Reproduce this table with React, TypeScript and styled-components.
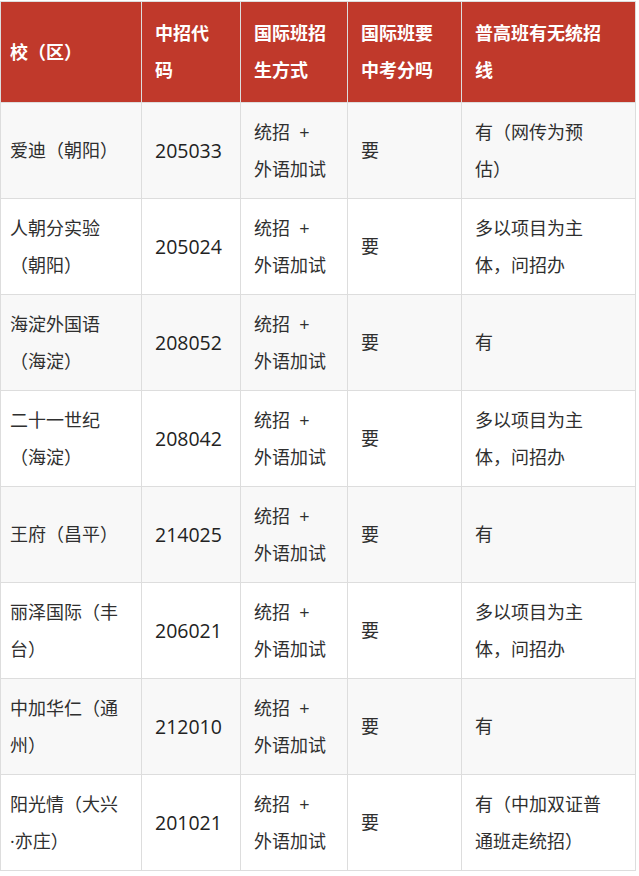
import React from "react"
import styled, { createGlobalStyle } from "styled-components"

const GlobalStyle = createGlobalStyle`
  html, body {
    margin: 0;
    padding: 0;
    background: #fff;
  }
  body {
    font-family: "Open Sans", "Noto Sans CJK SC", sans-serif;
  }
`

const Page = styled.div`
  width: 639px;
  padding-top: 1px;
`

const Table = styled.table`
  width: 635px;
  table-layout: fixed;
  border-collapse: collapse;
  font-size: 18px;
  line-height: 37px;
  color: #2f2f2f;
`

const HeadRow = styled.tr`
  height: 101px;
  background-color: #c0392b;
`

const HeadCell = styled.th`
  padding: 0 13px;
  text-align: left;
  vertical-align: middle;
  font-weight: 700;
  color: #fff;
  border: 1px solid #ddd;
  white-space: nowrap;

  &:first-child {
    padding-left: 9px;
  }
`

const Row = styled.tr<{ $shaded: boolean }>`
  height: 96px;
  background-color: ${(p) => (p.$shaded ? "#f8f8f8" : "#fff")};
`

const Cell = styled.td<{ $code?: boolean }>`
  padding: 0 13px;
  vertical-align: middle;
  border: 1px solid #ddd;
  white-space: pre;
  font-size: ${(p) => (p.$code ? "19.5px" : "18px")};
  color: ${(p) => (p.$code ? "#222" : "inherit")};

  &:first-child {
    padding-left: 9px;
  }
`

const widths = [141, 99, 107, 114, 174]

const header = [
  ["校（区）"],
  ["中招代", "码"],
  ["国际班招", "生方式"],
  ["国际班要", "中考分吗"],
  ["普高班有无统招", "线"],
]

const mode = ["统招  +", "外语加试"]

const rows: string[][][] = [
  [["爱迪（朝阳）"], ["205033"], mode, ["要"], ["有（网传为预", "估）"]],
  [["人朝分实验", "（朝阳）"], ["205024"], mode, ["要"], ["多以项目为主", "体，问招办"]],
  [["海淀外国语", "（海淀）"], ["208052"], mode, ["要"], ["有"]],
  [["二十一世纪", "（海淀）"], ["208042"], mode, ["要"], ["多以项目为主", "体，问招办"]],
  [["王府（昌平）"], ["214025"], mode, ["要"], ["有"]],
  [["丽泽国际（丰", "台）"], ["206021"], mode, ["要"], ["多以项目为主", "体，问招办"]],
  [["中加华仁（通", "州）"], ["212010"], mode, ["要"], ["有"]],
  [["阳光情（大兴", "·亦庄）"], ["201021"], mode, ["要"], ["有（中加双证普", "通班走统招）"]],
]

function Lines({ lines }: { lines: string[] }) {
  return (
    <>
      {lines.map((l, i) => (
        <React.Fragment key={i}>
          {i > 0 && <br />}
          {l}
        </React.Fragment>
      ))}
    </>
  )
}

export default function App() {
  return (
    <Page>
      <GlobalStyle />
      <Table>
        <colgroup>
          {widths.map((w, i) => (
            <col key={i} style={{ width: w }} />
          ))}
        </colgroup>
        <thead>
          <HeadRow>
            {header.map((h, i) => (
              <HeadCell key={i}>
                <Lines lines={h} />
              </HeadCell>
            ))}
          </HeadRow>
        </thead>
        <tbody>
          {rows.map((r, i) => (
            <Row key={i} $shaded={i % 2 === 0}>
              {r.map((c, j) => (
                <Cell key={j} $code={j === 1}>
                  <Lines lines={c} />
                </Cell>
              ))}
            </Row>
          ))}
        </tbody>
      </Table>
    </Page>
  )
}
